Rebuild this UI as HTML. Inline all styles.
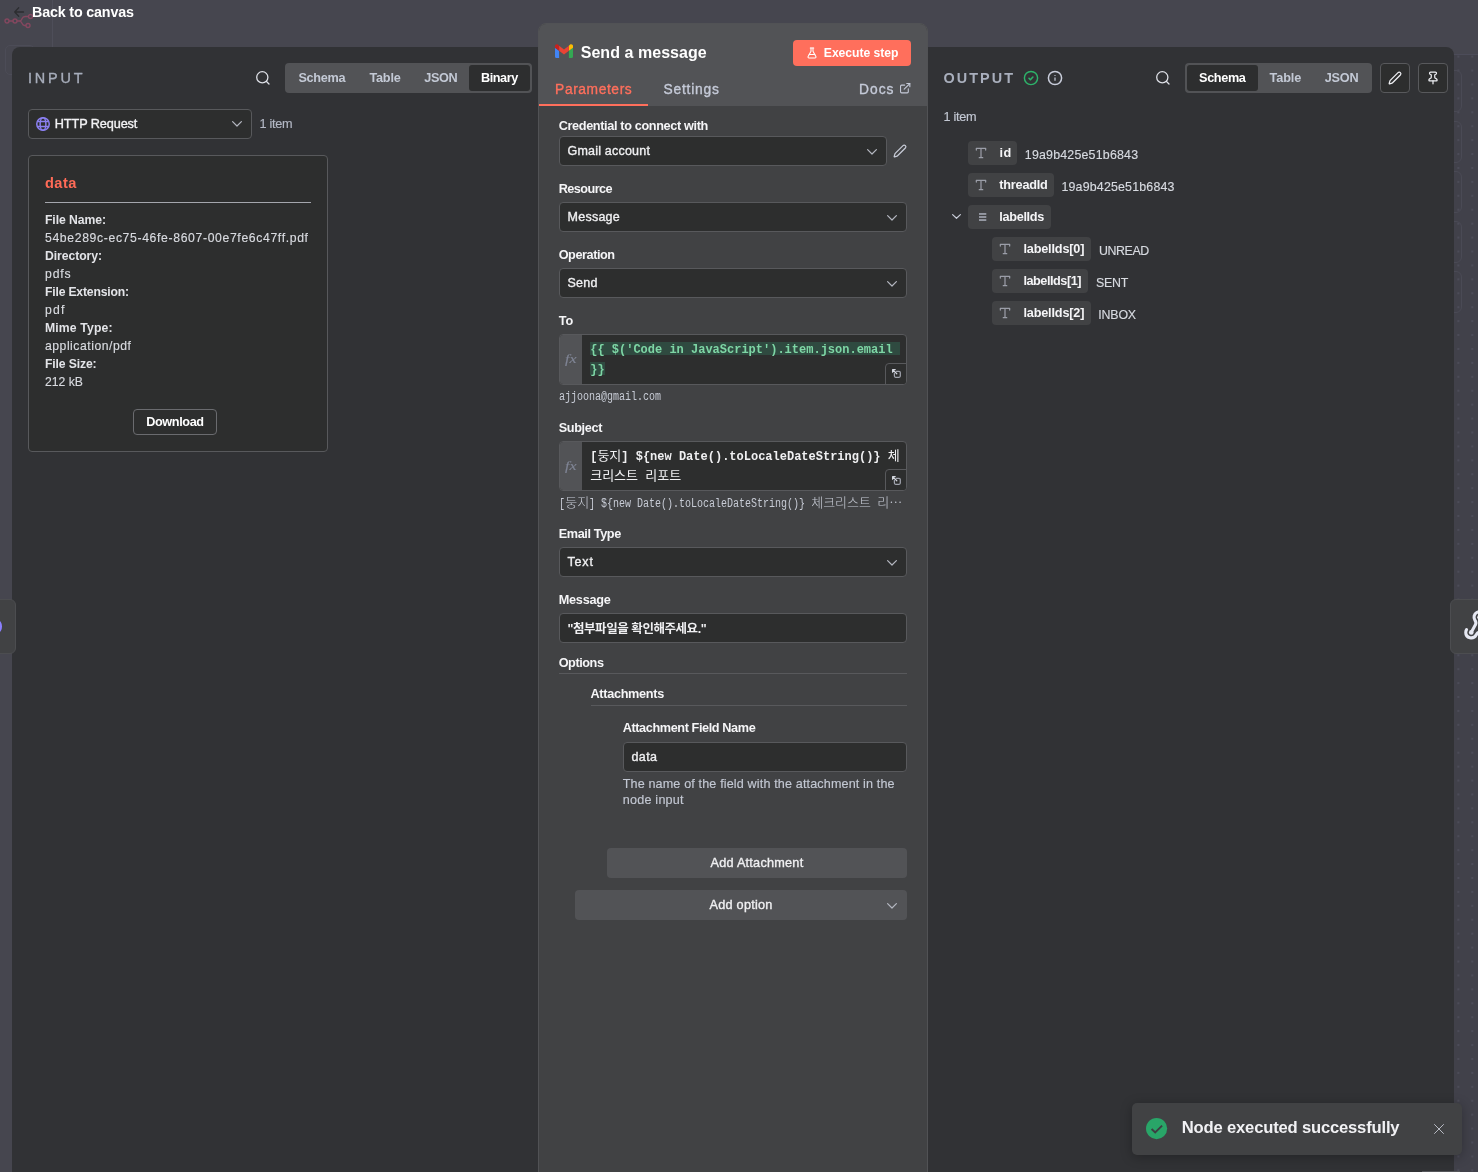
<!DOCTYPE html>
<html lang="en">
<head>
<meta charset="utf-8">
<title>n8n - Send a message</title>
<style>
*{box-sizing:border-box;margin:0;padding:0}
html,body{width:1478px;height:1172px;overflow:hidden}
body{background:#41414a;font-family:"Liberation Sans","Noto Sans CJK KR",sans-serif;color:#fff;font-size:12.5px;position:relative}
.a{position:absolute}
.t{position:absolute;white-space:nowrap;line-height:20px}
svg{position:absolute;overflow:visible}
.in{position:absolute;background:#2d2e2e;border:1px solid #58595c;border-radius:4px}
.pill{position:absolute;height:24px;background:#414244;border-radius:4px}
.btn{position:absolute;background:#525356;border-radius:4px}
.mono{font-family:"Liberation Mono","Noto Sans CJK KR",monospace}
.k{font-family:'Noto Sans CJK KR',sans-serif;font-size:13px;font-weight:normal}
.ti{line-height:1;font-family:"Liberation Serif",serif;font-size:14px;color:#9b9ea8}
</style>
</head>
<body>
<div id="root" style="position:absolute;left:0;top:0;width:1478px;height:1172px;will-change:transform">
<!-- dimmed canvas background -->
<div class="a" style="left:0;top:0;width:1478px;height:55px;background:#46464f;border-bottom:1px solid #4c4c59"></div>
<div class="a" style="left:0;top:47px;width:52px;height:1125px;background:#46464f"></div>
<div class="a" style="left:52px;top:0;width:1px;height:47px;background:#4e4e59"></div>
<div class="a" style="left:5px;top:45px;width:30px;height:30px;border:1px solid #4c4c57;border-radius:5px"></div>
<div class="a" style="left:1454px;top:55px;width:24px;height:1117px;background-color:#41414a;background-image:radial-gradient(circle,#50505d 0.55px,rgba(80,80,93,0) 1.15px);background-size:13.935px 13.935px;background-position:-2.620px -5.370px"></div>
<!-- faint node outlines on canvas right -->
<div class="a" style="left:1436px;top:70px;width:26px;height:42px;border:1px solid #4a4a55;border-radius:6px"></div>
<div class="a" style="left:1436px;top:121px;width:26px;height:42px;border:1px solid #4a4a55;border-radius:6px"></div>
<div class="a" style="left:1436px;top:171px;width:26px;height:42px;border:1px solid #4a4a55;border-radius:6px"></div>
<div class="a" style="left:1436px;top:221px;width:26px;height:42px;border:1px solid #4a4a55;border-radius:6px"></div>
<div class="a" style="left:1436px;top:271px;width:26px;height:42px;border:1px solid #4a4a55;border-radius:6px"></div>

<!-- back arrow + logo -->
<svg style="left:4px;top:13px" width="28" height="16" viewBox="0 0 28 16" fill="none" stroke="#84475f" stroke-width="1.400"><circle cx="3" cy="8" r="2"/><circle cx="11" cy="8" r="2"/><circle cx="26.5" cy="3.5" r="2"/><circle cx="24" cy="12.5" r="2"/><path d="M5 8h4M13 8h2.500c1.500 0 2-1 2.500-2.300S19.500 3.500 21 3.500h3.500M15.500 8c1.500 0 2 1 2.500 2.300s1 2.200 2.500 2.200h1.500"/></svg>
<svg style="left:14px;top:7px" width="10" height="10" viewBox="0 0 10 10" fill="none" stroke="#2c2d30" stroke-width="1.3" stroke-linecap="round" stroke-linejoin="round"><path d="M9.500 5H0.700M4.700 0.800L0.700 5l4 4.200"/></svg>

<!-- INPUT PANEL -->
<div class="a" style="left:12px;top:47px;width:530px;height:1125px;background:#313235;border-radius:8px 0 0 0"></div>
<!-- OUTPUT PANEL -->
<div class="a" style="left:924px;top:47px;width:530px;height:1125px;background:#313235;border-radius:0 8px 0 0"></div>
<!-- side tabs -->
<div class="a" style="left:-6px;top:599px;width:22px;height:55px;background:#414244;border:1px solid #4c4d50;border-radius:6px"></div>
<div class="a" style="left:-6px;top:620px;width:8px;height:13px;background:#8b7fff;border-radius:50%"></div>
<div class="a" style="left:1450px;top:599px;width:36px;height:55px;background:#414244;border:1px solid #4c4d50;border-radius:6px"></div>

<svg style="left:1462.500px;top:609.300px" width="33" height="33" viewBox="0 0 24 24" fill="none" stroke="#e6e8f2" stroke-width="2.250" stroke-linecap="round" stroke-linejoin="round"><circle cx="6" cy="17" r="1.700" fill="#e6e8f2" stroke="none"/><circle cx="12" cy="6" r="1.700" fill="#e6e8f2" stroke="none"/><path d="M18 16.980h-5.990c-1.100 0-1.950.940-2.480 1.900A4 4 0 0 1 2 17c.010-.700.200-1.400.570-2"/><path d="m6 17 3.130-5.780c.530-.970.100-2.180-.500-3.100a4 4 0 1 1 6.890-4.060"/><path d="m12 6 3.130 5.730C15.660 12.700 16.900 13 18 13a4 4 0 0 1 0 8"/></svg>

<!-- input header -->
<svg style="left:255px;top:70px" width="16" height="16" viewBox="0 0 16 16" fill="none" stroke="#dfe1e8" stroke-width="1.3" stroke-linecap="round"><circle cx="7.300" cy="7.300" r="5.600"/><path d="M11.500 11.500L14 14"/></svg>
<div class="a" style="left:285px;top:63px;width:247px;height:30px;background:#525356;border-radius:4px"></div>
<div class="a" style="left:469px;top:65px;width:61px;height:26px;background:#2d2e2f;border-radius:3px"></div>
<div class="in" style="left:28px;top:109px;width:224px;height:30px"></div>
<svg style="left:36px;top:117px" width="14" height="14" viewBox="0 0 14 14" fill="none" stroke="#8b80f2" stroke-width="1.500"><circle cx="7" cy="7" r="6.250"/><ellipse cx="7" cy="7" rx="2.900" ry="6.250"/><path d="M1.500 4.500h11M1.500 9.500h11" stroke-width="1.400"/></svg>
<svg style="left:232px;top:121px" width="10" height="6" viewBox="0 0 10 6" fill="none" stroke="#b4b7c0" stroke-width="1.2" stroke-linecap="round" stroke-linejoin="round"><path d="M0.600 0.600L5 5l4.400-4.400"/></svg>
<div class="in" style="left:28px;top:155px;width:300px;height:296.500px"></div>
<div class="a" style="left:45px;top:202px;width:266px;height:1px;background:#a4a6ad"></div>
<div class="in" style="left:133px;top:409px;width:84px;height:26px;border-color:#6a6b6f"></div>

<!-- MAIN PANEL -->
<div class="a" style="left:538px;top:23px;width:390px;height:1160px;background:#414244;border:1px solid #515255;border-radius:8px 8px 0 0;overflow:hidden"><div class="a" style="left:0;top:0;width:390px;height:82px;background:#525356"></div><div class="a" style="left:0;top:80px;width:109px;height:2px;background:#ff6f5c"></div></div>
<!-- gmail icon -->
<svg style="left:555px;top:44px" width="18" height="14" viewBox="0 0 18 14"><path d="M1.200 14h2.900V6.800L0 3.700v9.100C0 13.500.5 14 1.200 14z" fill="#4285f4"/><path d="M13.900 14h2.900c.700 0 1.200-.5 1.200-1.200V3.700l-4.100 3.100z" fill="#34a853"/><path d="M13.900 1.700v5.100L18 3.700V2c0-1.500-1.700-2.400-2.900-1.500z" fill="#fbbc04"/><path d="M4.100 6.800V1.700L9 5.400l4.900-3.700v5.100L9 10.500z" fill="#ea4335"/><path d="M0 2v1.700l4.100 3.100V1.700L2.900.5C1.700-.4 0 .5 0 2z" fill="#c5221f"/></svg>
<!-- execute button -->
<div class="a" style="left:793px;top:40px;width:118px;height:26px;background:#ff6f5c;border-radius:4px"></div>
<svg style="left:806.050px;top:46.900px" width="12" height="12" viewBox="0 0 24 24" fill="none" stroke="#fff" stroke-width="2.100" stroke-linecap="round" stroke-linejoin="round"><path d="M14 2v6a2 2 0 0 0 .245.960l5.510 10.080A2 2 0 0 1 18 22H6a2 2 0 0 1-1.755-2.960l5.510-10.080A2 2 0 0 0 10 8V2"/><path d="M6.453 15h11.094"/><path d="M8.500 2h7"/></svg>
<!-- docs external icon -->
<svg style="left:898.800px;top:82.200px" width="12.400" height="12.400" viewBox="0 0 24 24" fill="none" stroke="#c5cad8" stroke-width="2.100" stroke-linecap="round" stroke-linejoin="round"><path d="M15 3h6v6"/><path d="M10 14 21 3"/><path d="M18 13v6a2 2 0 0 1-2 2H5a2 2 0 0 1-2-2V8a2 2 0 0 1 2-2h6"/></svg>

<!-- fields -->
<div class="in" style="left:559px;top:136px;width:328px;height:29.500px"></div>
<svg style="left:867px;top:148.500px" width="10" height="6" viewBox="0 0 10 6" fill="none" stroke="#b4b7c0" stroke-width="1.2" stroke-linecap="round" stroke-linejoin="round"><path d="M0.600 0.600L5 5l4.400-4.400"/></svg>
<svg style="left:893.100px;top:143.900px" width="14" height="14" viewBox="0 0 24 24" fill="none" stroke="#c8ccd8" stroke-width="2.100" stroke-linecap="round" stroke-linejoin="round"><path d="M21.174 6.812a1 1 0 0 0-3.986-3.987L3.842 16.174a2 2 0 0 0-.5.830l-1.321 4.352a.5.5 0 0 0 .623.622l4.353-1.320a2 2 0 0 0 .830-.497z"/></svg>
<div class="in" style="left:559px;top:202px;width:348px;height:29.500px"></div>
<svg style="left:887px;top:214.500px" width="10" height="6" viewBox="0 0 10 6" fill="none" stroke="#b4b7c0" stroke-width="1.2" stroke-linecap="round" stroke-linejoin="round"><path d="M0.600 0.600L5 5l4.400-4.400"/></svg>
<div class="in" style="left:559px;top:268px;width:348px;height:29.500px"></div>
<svg style="left:887px;top:280.500px" width="10" height="6" viewBox="0 0 10 6" fill="none" stroke="#b4b7c0" stroke-width="1.2" stroke-linecap="round" stroke-linejoin="round"><path d="M0.600 0.600L5 5l4.400-4.400"/></svg>

<!-- To expression -->
<div class="in" style="left:559px;top:334px;width:348px;height:50.500px;overflow:hidden"><div class="a" style="left:-1px;top:-1px;width:23px;height:52px;background:#525356"></div><div class="a" style="left:325px;top:28px;width:24px;height:24px;border:1px solid #58595c;border-radius:4px 0 0 0;background:#2d2e2e"></div></div>
<div class="t" style="left:564.700px;top:352px;line-height:1;font-family:'Liberation Serif',serif;font-style:italic;font-size:13.500px;color:#7f8494;transform:scaleX(1.18);transform-origin:0 0;-webkit-text-stroke:0.15px #7f8494">fx</div>
<svg style="left:891.800px;top:368.9px" width="9" height="9" viewBox="0 0 9 9" fill="none" stroke-width="1.250" stroke-linecap="round" stroke-linejoin="round"><path d="M4.300 2.400h2.800c.7 0 1.200.5 1.200 1.200v3.500c0 .7-.5 1.200-1.200 1.200H3.600c-.7 0-1.200-.5-1.200-1.200V4.400" stroke="#a0a3ad"/><path d="M0.600 3.200V0.600h2.600M0.600 0.600L4.800 4.800" stroke="#d3d6de"/></svg>
<div class="a" style="left:590px;top:342px;width:310px;height:13px;background:#2f4a40"></div>
<div class="a" style="left:590px;top:362px;width:14.500px;height:13px;background:#2f4a40"></div>
<div class="t mono" style="left:590.200px;top:340px;font-size:12px;font-weight:bold;line-height:20px;color:#7ed6a5">{{ $('Code in JavaScript').item.json.email</div>
<div class="t mono" style="left:590.200px;top:360px;font-size:12px;font-weight:bold;line-height:20px;color:#7ed6a5">}}</div>
<div class="t mono" style="left:559.200px;top:390.500px;font-size:12px;line-height:1;color:#c8ccd6;transform:scaleX(0.8333);transform-origin:0 0">ajjoona@gmail.com</div>

<!-- Subject expression -->
<div class="in" style="left:559px;top:441px;width:348px;height:50px;overflow:hidden"><div class="a" style="left:-1px;top:-1px;width:23px;height:52px;background:#525356"></div><div class="a" style="left:325px;top:27px;width:24px;height:24px;border:1px solid #58595c;border-radius:4px 0 0 0;background:#2d2e2e"></div></div>
<div class="t" style="left:564.700px;top:459px;line-height:1;font-family:'Liberation Serif',serif;font-style:italic;font-size:13.500px;color:#7f8494;transform:scaleX(1.18);transform-origin:0 0;-webkit-text-stroke:0.15px #7f8494">fx</div>
<svg style="left:891.800px;top:475.9px" width="9" height="9" viewBox="0 0 9 9" fill="none" stroke-width="1.250" stroke-linecap="round" stroke-linejoin="round"><path d="M4.300 2.400h2.800c.7 0 1.200.5 1.200 1.200v3.500c0 .7-.5 1.200-1.200 1.200H3.600c-.7 0-1.200-.5-1.200-1.200V4.400" stroke="#a0a3ad"/><path d="M0.600 3.200V0.600h2.600M0.600 0.600L4.800 4.800" stroke="#d3d6de"/></svg>
<div class="t mono" style="left:590.200px;top:445px;font-size:12px;font-weight:bold;line-height:20px;color:#f0f0f2">[<span class="k">둥지</span>] ${new Date().toLocaleDateString()} <span class="k">체</span></div>
<div class="t mono" style="left:590.200px;top:465px;font-size:12px;font-weight:bold;line-height:20px;color:#f0f0f2"><span class="k">크리스트</span> <span class="k">리포트</span></div>
<!-- subject hint: segments -->
<div class="t mono" style="left:559.200px;top:498px;font-size:12px;line-height:1;color:#c8ccd6;transform:scaleX(0.8333);transform-origin:0 0">[</div>
<div class="t" style="left:565.200px;top:495px;font-size:13px;line-height:1;color:#c8ccd6;font-family:'Noto Sans CJK KR',sans-serif;font-weight:300">둥지</div>
<div class="t mono" style="left:589.200px;top:498px;font-size:12px;line-height:1;color:#c8ccd6;transform:scaleX(0.8333);transform-origin:0 0">] ${new Date().toLocaleDateString()} </div>
<div class="t" style="left:811.200px;top:495px;font-size:13px;line-height:1;color:#c8ccd6;font-family:'Noto Sans CJK KR',sans-serif;font-weight:300">체크리스트</div>
<div class="t" style="left:877.200px;top:495px;font-size:13px;line-height:1;color:#c8ccd6;font-family:'Noto Sans CJK KR',sans-serif;font-weight:300">리⋯</div>

<div class="in" style="left:559px;top:547px;width:348px;height:29.500px"></div>
<svg style="left:887px;top:559.500px" width="10" height="6" viewBox="0 0 10 6" fill="none" stroke="#b4b7c0" stroke-width="1.2" stroke-linecap="round" stroke-linejoin="round"><path d="M0.600 0.600L5 5l4.400-4.400"/></svg>
<div class="in" style="left:559px;top:613px;width:348px;height:29.500px"></div>
<div class="a" style="left:559px;top:673px;width:348px;height:1px;background:#58595c"></div>
<div class="a" style="left:591px;top:705px;width:316px;height:1px;background:#58595c"></div>
<div class="in" style="left:623px;top:742px;width:284px;height:29.500px"></div>
<div class="btn" style="left:607px;top:848px;width:300px;height:30px"></div>
<div class="btn" style="left:575px;top:890px;width:332px;height:30px"></div>
<svg style="left:887px;top:902.500px" width="10" height="6" viewBox="0 0 10 6" fill="none" stroke="#b4b7c0" stroke-width="1.2" stroke-linecap="round" stroke-linejoin="round"><path d="M0.600 0.600L5 5l4.400-4.400"/></svg>

<!-- output header -->
<svg style="left:1023px;top:70px" width="16" height="16" viewBox="0 0 16 16" fill="none" stroke="#2db36a" stroke-width="1.450" stroke-linecap="round" stroke-linejoin="round"><circle cx="8" cy="8" r="6.600"/><path d="M6 8.300l1.400 1.400 2.500-2.700" stroke-width="1.600"/></svg>
<svg style="left:1047px;top:70px" width="16" height="16" viewBox="0 0 16 16" fill="none" stroke="#c9cddb" stroke-width="1.500" stroke-linecap="butt"><circle cx="8" cy="8" r="6.600"/><path d="M8 7.400v3.400" stroke="#b4b8c5" stroke-width="1.400"/><path d="M7.300 5.500h1.400" stroke="#b4b8c5" stroke-width="0.900"/></svg>
<svg style="left:1155px;top:70px" width="16" height="16" viewBox="0 0 16 16" fill="none" stroke="#dfe1e8" stroke-width="1.3" stroke-linecap="round"><circle cx="7.300" cy="7.300" r="5.600"/><path d="M11.500 11.500L14 14"/></svg>
<div class="a" style="left:1185px;top:63px;width:187px;height:30px;background:#525356;border-radius:4px"></div>
<div class="a" style="left:1187px;top:65px;width:71px;height:26px;background:#2d2e2f;border-radius:3px"></div>
<div class="in" style="left:1380px;top:63px;width:30px;height:30px"></div>
<div class="in" style="left:1418px;top:63px;width:30px;height:30px"></div>
<svg style="left:1388.100px;top:71px" width="14" height="14" viewBox="0 0 24 24" fill="none" stroke="#f0f1f5" stroke-width="2.100" stroke-linecap="round" stroke-linejoin="round"><path d="M21.174 6.812a1 1 0 0 0-3.986-3.987L3.842 16.174a2 2 0 0 0-.5.830l-1.321 4.352a.5.5 0 0 0 .623.622l4.353-1.320a2 2 0 0 0 .830-.497z"/></svg>
<svg style="left:1426px;top:70.800px" width="14" height="14" viewBox="0 0 24 24" fill="none" stroke="#f0f1f5" stroke-width="2.100" stroke-linecap="round" stroke-linejoin="round"><path d="M12 17v5"/><path d="M9 10.760a2 2 0 0 1-1.110 1.790l-1.780.9A2 2 0 0 0 5 15.240V16a1 1 0 0 0 1 1h12a1 1 0 0 0 1-1v-.760a2 2 0 0 0-1.110-1.790l-1.780-.9A2 2 0 0 1 15 10.760V7a1 1 0 0 1 1-1 2 2 0 0 0 0-4H8a2 2 0 0 0 0 4 1 1 0 0 1 1 1z"/></svg>

<!-- schema pills -->
<div class="pill" style="left:968px;top:141px;width:49px"></div>
<div class="pill" style="left:968px;top:173px;width:86px"></div>
<div class="pill" style="left:968px;top:205px;width:83px"></div>
<div class="pill" style="left:992px;top:237px;width:99px"></div>
<div class="pill" style="left:992px;top:269px;width:96px"></div>
<div class="pill" style="left:992px;top:301px;width:99px"></div>
<svg style="left:952px;top:214px" width="9" height="5" viewBox="0 0 9 5" fill="none" stroke="#c8ccd8" stroke-width="1.200" stroke-linecap="round" stroke-linejoin="round"><path d="M0.600 0.600L4.500 4.300 8.400 0.600"/></svg>
<svg style="left:979px;top:213px" width="7.300" height="8" viewBox="0 0 7.300 8" fill="#9498a2"><rect x="0" y="0" width="7.300" height="1.900"/><rect x="0" y="3.050" width="7.300" height="1.900"/><rect x="0" y="6.100" width="7.300" height="1.900"/></svg>
<svg style="left:974px;top:146px" width="14" height="14" viewBox="0 0 24 24" fill="none" stroke="#9b9ea8" stroke-width="2.1" stroke-linecap="round" stroke-linejoin="round"><path d="M4 7V4h16v3M9 20h6M12 4v16"/></svg>
<svg style="left:974px;top:178px" width="14" height="14" viewBox="0 0 24 24" fill="none" stroke="#9b9ea8" stroke-width="2.1" stroke-linecap="round" stroke-linejoin="round"><path d="M4 7V4h16v3M9 20h6M12 4v16"/></svg>
<svg style="left:998px;top:242px" width="14" height="14" viewBox="0 0 24 24" fill="none" stroke="#9b9ea8" stroke-width="2.1" stroke-linecap="round" stroke-linejoin="round"><path d="M4 7V4h16v3M9 20h6M12 4v16"/></svg>
<svg style="left:998px;top:274px" width="14" height="14" viewBox="0 0 24 24" fill="none" stroke="#9b9ea8" stroke-width="2.1" stroke-linecap="round" stroke-linejoin="round"><path d="M4 7V4h16v3M9 20h6M12 4v16"/></svg>
<svg style="left:998px;top:306px" width="14" height="14" viewBox="0 0 24 24" fill="none" stroke="#9b9ea8" stroke-width="2.1" stroke-linecap="round" stroke-linejoin="round"><path d="M4 7V4h16v3M9 20h6M12 4v16"/></svg>

<div class="a" style="left:1422px;top:1171px;width:38px;height:1px;background:#55565a"></div>
<!-- toast -->
<div class="a" style="left:1132px;top:1103px;width:330px;height:51.500px;background:#414244;border-radius:5px;box-shadow:0 2px 12px rgba(0,0,0,.28)"></div>
<svg style="left:1146.400px;top:1118.300px" width="21.200" height="21.200" viewBox="0 0 21.200 21.200"><circle cx="10.600" cy="10.600" r="10.600" fill="#29a568"/><path d="M5.600 11l3.600 3.500 6.900-6.900" fill="none" stroke="#3d3e42" stroke-width="1.900" stroke-linecap="butt" stroke-linejoin="miter"/></svg>
<svg style="left:1434px;top:1124px" width="10" height="10" viewBox="0 0 10 10" stroke="#b8bbc4" stroke-width="1" stroke-linecap="round"><path d="M0.500 0.500l9 9M9.500 0.500l-9 9"/></svg>

<div class="t" style="left:32.0px;top:2px;font-size:14.3px;font-weight:bold;color:#ffffff;letter-spacing:-0.17px;">Back to canvas</div>
<div class="t" style="left:28.0px;top:68px;font-size:14.4px;font-weight:normal;color:#a7adbb;letter-spacing:2.83px;-webkit-text-stroke:0.35px #a7adbb;">INPUT</div>
<div class="t" style="left:298.4px;top:68px;font-size:12.7px;font-weight:bold;color:#c3c9d5;letter-spacing:-0.31px;">Schema</div>
<div class="t" style="left:369.4px;top:68px;font-size:12.7px;font-weight:bold;color:#c3c9d5;letter-spacing:-0.20px;">Table</div>
<div class="t" style="left:424.2px;top:68px;font-size:12.7px;font-weight:bold;color:#c3c9d5;letter-spacing:-0.35px;">JSON</div>
<div class="t" style="left:481.0px;top:68px;font-size:12.7px;font-weight:bold;color:#ffffff;letter-spacing:-0.46px;">Binary</div>
<div class="t" style="left:54.8px;top:114px;font-size:12.7px;font-weight:normal;color:#f3f3f5;letter-spacing:-0.10px;-webkit-text-stroke:0.35px #f3f3f5;">HTTP Request</div>
<div class="t" style="left:259.4px;top:114px;font-size:12.7px;font-weight:normal;color:#b4b9c6;letter-spacing:-0.25px;-webkit-text-stroke:0.15px #b4b9c6;">1 item</div>
<div class="t" style="left:45.0px;top:173px;font-size:14.6px;font-weight:bold;color:#ff6b57;letter-spacing:0.46px;">data</div>
<div class="t" style="left:45.0px;top:210px;font-size:12.2px;font-weight:bold;color:#e3e4e8;letter-spacing:-0.07px;">File Name:</div>
<div class="t" style="left:45.0px;top:228px;font-size:12.2px;font-weight:normal;color:#d9dbe0;letter-spacing:0.65px;-webkit-text-stroke:0.15px #d9dbe0;">54be289c-ec75-46fe-8607-00e7fe6c47ff.pdf</div>
<div class="t" style="left:45.0px;top:246px;font-size:12.2px;font-weight:bold;color:#e3e4e8;letter-spacing:-0.06px;">Directory:</div>
<div class="t" style="left:45.0px;top:264px;font-size:12.2px;font-weight:normal;color:#d9dbe0;letter-spacing:0.85px;-webkit-text-stroke:0.15px #d9dbe0;">pdfs</div>
<div class="t" style="left:45.0px;top:282px;font-size:12.2px;font-weight:bold;color:#e3e4e8;letter-spacing:-0.19px;">File Extension:</div>
<div class="t" style="left:45.0px;top:300px;font-size:12.2px;font-weight:normal;color:#d9dbe0;letter-spacing:1.27px;-webkit-text-stroke:0.15px #d9dbe0;">pdf</div>
<div class="t" style="left:45.0px;top:318px;font-size:12.2px;font-weight:bold;color:#e3e4e8;letter-spacing:0.15px;">Mime Type:</div>
<div class="t" style="left:45.0px;top:336px;font-size:12.2px;font-weight:normal;color:#d9dbe0;letter-spacing:0.52px;-webkit-text-stroke:0.15px #d9dbe0;">application/pdf</div>
<div class="t" style="left:45.0px;top:354px;font-size:12.2px;font-weight:bold;color:#e3e4e8;letter-spacing:-0.13px;">File Size:</div>
<div class="t" style="left:45.0px;top:372px;font-size:12.2px;font-weight:normal;color:#d9dbe0;letter-spacing:-0.01px;-webkit-text-stroke:0.15px #d9dbe0;">212 kB</div>
<div class="t" style="left:146.2px;top:412px;font-size:12.7px;font-weight:bold;color:#ffffff;letter-spacing:-0.39px;">Download</div>
<div class="t" style="left:580.7px;top:43px;font-size:16px;font-weight:bold;color:#ffffff;letter-spacing:0.05px;">Send a message</div>
<div class="t" style="left:823.8px;top:43px;font-size:12.2px;font-weight:bold;color:#ffffff;letter-spacing:-0.05px;">Execute step</div>
<div class="t" style="left:555.1px;top:80px;font-size:13.8px;font-weight:normal;color:#ff6f5c;letter-spacing:0.59px;-webkit-text-stroke:0.35px #ff6f5c;">Parameters</div>
<div class="t" style="left:663.5px;top:80px;font-size:13.8px;font-weight:normal;color:#c5cad8;letter-spacing:0.78px;-webkit-text-stroke:0.35px #c5cad8;">Settings</div>
<div class="t" style="left:858.9px;top:80px;font-size:13.8px;font-weight:normal;color:#c5cad8;letter-spacing:1.05px;-webkit-text-stroke:0.35px #c5cad8;">Docs</div>
<div class="t" style="left:558.7px;top:116px;font-size:12.7px;font-weight:bold;color:#f5f5f7;letter-spacing:-0.36px;">Credential to connect with</div>
<div class="t" style="left:558.7px;top:179px;font-size:12.7px;font-weight:bold;color:#f5f5f7;letter-spacing:-0.55px;">Resource</div>
<div class="t" style="left:558.7px;top:245px;font-size:12.7px;font-weight:bold;color:#f5f5f7;letter-spacing:-0.44px;">Operation</div>
<div class="t" style="left:558.7px;top:311px;font-size:12.7px;font-weight:bold;color:#f5f5f7;letter-spacing:-0.06px;">To</div>
<div class="t" style="left:558.7px;top:418px;font-size:12.7px;font-weight:bold;color:#f5f5f7;letter-spacing:-0.35px;">Subject</div>
<div class="t" style="left:558.7px;top:524px;font-size:12.7px;font-weight:bold;color:#f5f5f7;letter-spacing:-0.39px;">Email Type</div>
<div class="t" style="left:558.7px;top:590px;font-size:12.7px;font-weight:bold;color:#f5f5f7;letter-spacing:-0.23px;">Message</div>
<div class="t" style="left:558.7px;top:653px;font-size:12.7px;font-weight:bold;color:#f5f5f7;letter-spacing:-0.44px;">Options</div>
<div class="t" style="left:590.5px;top:684px;font-size:12.7px;font-weight:bold;color:#f5f5f7;letter-spacing:-0.31px;">Attachments</div>
<div class="t" style="left:622.7px;top:718px;font-size:12.7px;font-weight:bold;color:#f5f5f7;letter-spacing:-0.40px;">Attachment Field Name</div>
<div class="t" style="left:567.5px;top:141px;font-size:12.5px;font-weight:normal;color:#f0f0f2;letter-spacing:0.21px;-webkit-text-stroke:0.35px #f0f0f2;">Gmail account</div>
<div class="t" style="left:567.5px;top:207px;font-size:12.5px;font-weight:normal;color:#f0f0f2;letter-spacing:0.26px;-webkit-text-stroke:0.35px #f0f0f2;">Message</div>
<div class="t" style="left:567.5px;top:273px;font-size:12.5px;font-weight:normal;color:#f0f0f2;letter-spacing:0.23px;-webkit-text-stroke:0.35px #f0f0f2;">Send</div>
<div class="t" style="left:567.5px;top:552px;font-size:12.5px;font-weight:normal;color:#f0f0f2;letter-spacing:0.82px;-webkit-text-stroke:0.35px #f0f0f2;">Text</div>
<div class="t" style="left:631.5px;top:747px;font-size:12.5px;font-weight:normal;color:#f0f0f2;letter-spacing:0.39px;-webkit-text-stroke:0.35px #f0f0f2;">data</div>
<div class="t" style="left:567.5px;top:619px;font-size:12.5px;font-weight:bold;color:#f0f0f2;letter-spacing:-0.44px;">"첨부파일을 확인해주세요."</div>
<div class="t" style="left:622.7px;top:774px;font-size:12.6px;font-weight:normal;color:#c3c8d3;letter-spacing:0.14px;-webkit-text-stroke:0.15px #c3c8d3;">The name of the field with the attachment in the</div>
<div class="t" style="left:622.7px;top:790px;font-size:12.6px;font-weight:normal;color:#c3c8d3;letter-spacing:0.23px;-webkit-text-stroke:0.15px #c3c8d3;">node input</div>
<div class="t" style="left:710.6px;top:853px;font-size:12.7px;font-weight:normal;color:#f0f0f2;letter-spacing:0.23px;-webkit-text-stroke:0.35px #f0f0f2;">Add Attachment</div>
<div class="t" style="left:709.5px;top:895px;font-size:12.7px;font-weight:normal;color:#f0f0f2;letter-spacing:0.25px;-webkit-text-stroke:0.35px #f0f0f2;">Add option</div>
<div class="t" style="left:943.5px;top:68px;font-size:14.4px;font-weight:bold;color:#a9afbd;letter-spacing:2.07px;">OUTPUT</div>
<div class="t" style="left:1199.1px;top:68px;font-size:12.7px;font-weight:bold;color:#ffffff;letter-spacing:-0.37px;">Schema</div>
<div class="t" style="left:1269.5px;top:68px;font-size:12.7px;font-weight:bold;color:#c3c9d5;letter-spacing:-0.08px;">Table</div>
<div class="t" style="left:1324.7px;top:68px;font-size:12.7px;font-weight:bold;color:#c3c9d5;letter-spacing:-0.19px;">JSON</div>
<div class="t" style="left:943.5px;top:107px;font-size:12.7px;font-weight:normal;color:#c3c8d3;letter-spacing:-0.31px;-webkit-text-stroke:0.15px #c3c8d3;">1 item</div>
<div class="t" style="left:999.6px;top:143px;font-size:12.7px;font-weight:bold;color:#f5f5f7;letter-spacing:0.32px;">id</div>
<div class="t" style="left:999.3px;top:175px;font-size:12.7px;font-weight:bold;color:#f5f5f7;letter-spacing:-0.22px;">threadId</div>
<div class="t" style="left:999.3px;top:207px;font-size:12.7px;font-weight:bold;color:#f5f5f7;letter-spacing:-0.32px;">labelIds</div>
<div class="t" style="left:1023.4px;top:239px;font-size:12.7px;font-weight:bold;color:#f5f5f7;letter-spacing:-0.17px;">labelIds[0]</div>
<div class="t" style="left:1023.4px;top:271px;font-size:12.7px;font-weight:bold;color:#f5f5f7;letter-spacing:-0.46px;">labelIds[1]</div>
<div class="t" style="left:1023.4px;top:303px;font-size:12.7px;font-weight:bold;color:#f5f5f7;letter-spacing:-0.17px;">labelIds[2]</div>
<div class="t" style="left:1024.8px;top:145px;font-size:12.4px;font-weight:normal;color:#d7dae0;letter-spacing:0.20px;-webkit-text-stroke:0.15px #d7dae0;">19a9b425e51b6843</div>
<div class="t" style="left:1061.4px;top:177px;font-size:12.4px;font-weight:normal;color:#d7dae0;letter-spacing:0.19px;-webkit-text-stroke:0.15px #d7dae0;">19a9b425e51b6843</div>
<div class="t" style="left:1099.0px;top:241px;font-size:12.4px;font-weight:normal;color:#d7dae0;letter-spacing:-0.41px;-webkit-text-stroke:0.15px #d7dae0;">UNREAD</div>
<div class="t" style="left:1096.1px;top:273px;font-size:12.4px;font-weight:normal;color:#d7dae0;letter-spacing:-0.25px;-webkit-text-stroke:0.15px #d7dae0;">SENT</div>
<div class="t" style="left:1098.3px;top:305px;font-size:12.4px;font-weight:normal;color:#d7dae0;letter-spacing:-0.19px;-webkit-text-stroke:0.15px #d7dae0;">INBOX</div>
<div class="t" style="left:1181.8px;top:1118px;font-size:16.6px;font-weight:bold;color:#f1f1f4;letter-spacing:-0.18px;">Node executed successfully</div>
</div>
</body>
</html>
